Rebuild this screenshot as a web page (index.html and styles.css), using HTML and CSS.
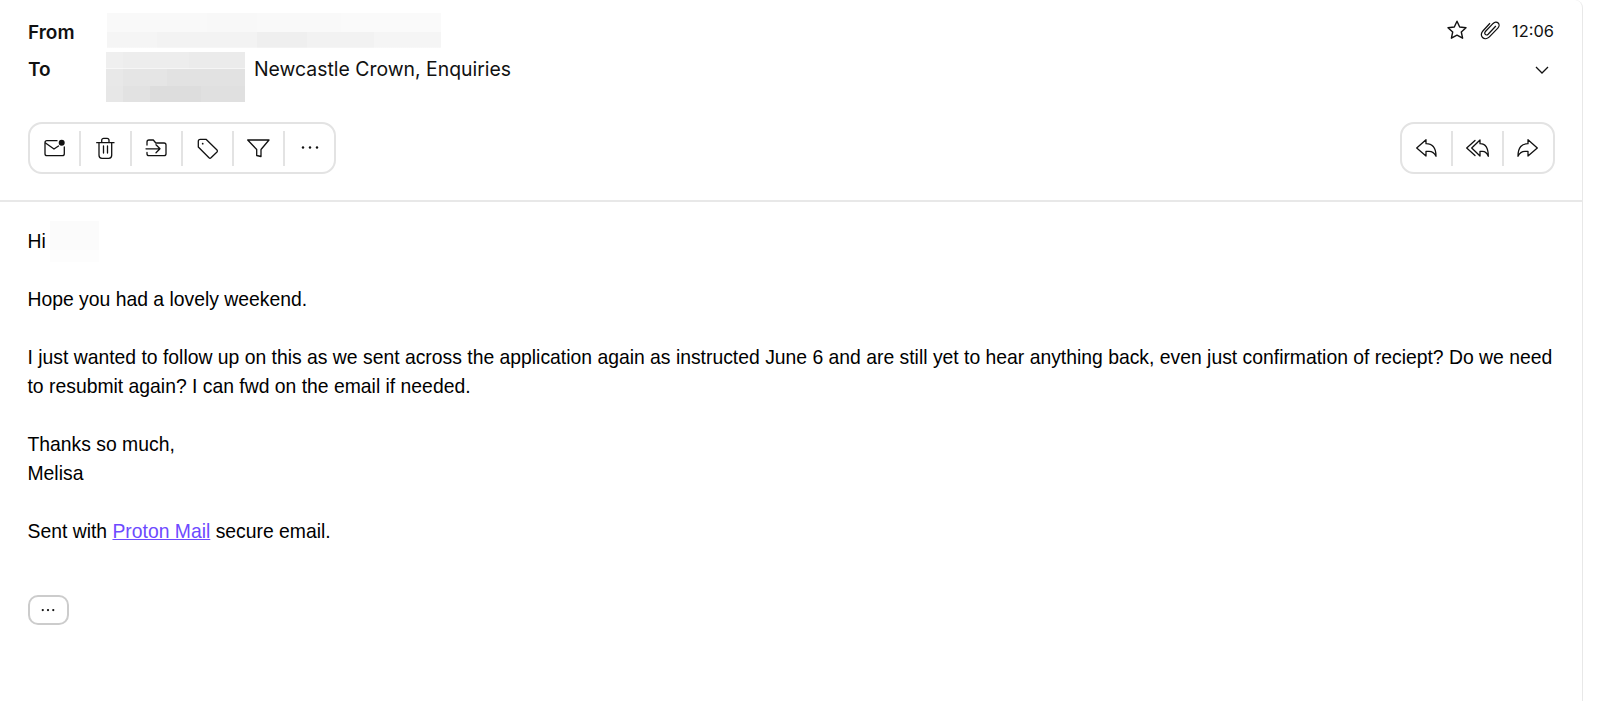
FILE: index.html
```html
<!DOCTYPE html>
<html lang="en">
<head>
    <meta charset="UTF-8">
    <title>Message</title>
    <link rel="stylesheet" href="styles.css">
</head>
<body>
    <div class="message">
        <header class="message-header">
            <div class="meta-row from-row">
                <span class="meta-label">From</span>
                <span class="redact redact-from"></span>
                <div class="meta-right">
                    <svg class="icon-sm star" viewBox="0 0 24 24"><path d="M12 3.200l2.700 5.800 6.300.7-4.700 4.300 1.300 6.200L12 17.100l-5.600 3.100 1.300-6.200L3 9.700l6.300-.7z"/></svg>
                    <svg class="icon-sm" viewBox="0 0 24 24"><path transform="translate(1.200 1.200) scale(.9)" d="M18.500 7.500l-8.600 9.200c-1 1-2.400 1-3.200.2s-.7-2.200.2-3.200l8.600-9c1.700-1.700 4.200-1.800 5.600-.4s1.300 3.900-.4 5.600l-9.400 9.800c-2.300 2.300-5.600 2.600-7.600.7s-1.700-5.200.6-7.600L12 4.500"/></svg>
                    <span class="time">12:06</span>
                </div>
            </div>
            <div class="meta-row to-row">
                <span class="meta-label">To</span>
                <span class="redact redact-to"></span>
                <span class="recipient">Newcastle Crown, Enquiries</span>
                <svg class="chevron" viewBox="0 0 16 16"><path d="M2 5l6 6 6-6"/></svg>
            </div>
            <div class="toolbar-row">
                <div class="btn-group">
                    <button class="tool-btn"><svg viewBox="0 0 24 24"><path d="M15 4.700H5a2 2 0 0 0-2 2v11a2 2 0 0 0 2 2h15.300a2 2 0 0 0 2-2V11"/><path d="M3.500 7l8.500 6 4.500-3"/><circle class="dot" cx="19.700" cy="6.700" r="3"/></svg></button>
                    <button class="tool-btn"><svg viewBox="0 0 24 24"><path d="M3.700 6.700H21M8.700 6.700V4.300a2 2 0 0 1 2-2H14a2 2 0 0 1 2 2v2.400M6 6.700v12.600a3 3 0 0 0 3 3h6.700a3 3 0 0 0 3-3V6.700M10.500 10v7M14.500 10v7"/></svg></button>
                    <button class="tool-btn"><svg viewBox="0 0 24 24"><path d="M3 9V6a2 2 0 0 1 2-2h4.300l2.500 3H20a2 2 0 0 1 2 2v8.700a2 2 0 0 1-2 2H5a2 2 0 0 1-2-2v-1.200"/><path d="M2 12.800h14M12 8.800l4 4-4 4"/></svg></button>
                    <button class="tool-btn"><svg viewBox="0 0 24 24"><path d="M3.300 5.300a2 2 0 0 1 2-2H11L22 14a1.500 1.500 0 0 1 0 2l-6 5.800a1.500 1.500 0 0 1-2 0L3.300 11z"/><circle class="dot" cx="7.700" cy="7.700" r=".9"/></svg></button>
                    <button class="tool-btn"><svg viewBox="0 0 24 24"><path d="M1.700 4H23l-8 9.500v7l-4.300-1v-6z"/></svg></button>
                    <button class="tool-btn"><svg viewBox="0 0 24 24"><circle class="dot" cx="6" cy="11.500" r="1.200"/><circle class="dot" cx="13" cy="11.500" r="1.200"/><circle class="dot" cx="20" cy="11.500" r="1.200"/></svg></button>
                </div>
                <div class="btn-group">
                    <button class="tool-btn"><svg viewBox="0 0 24 24"><path d="M2.700 12L12 3.700v4c6 0 10 3.300 10 12.600-1.500-3.300-4-5-7-5h-3V20z"/></svg></button>
                    <button class="tool-btn"><svg viewBox="0 0 24 24"><path d="M6.700 12L15 4v3.700c5 0 8.300 3.300 8.300 12.600-1.300-3.300-3.300-5-5.800-5H15V20z"/><path d="M10 4.500L1.700 12l8.300 7.500"/></svg></button>
                    <button class="tool-btn"><svg viewBox="0 0 24 24"><path d="M21.300 12L12 3.700v4c-6 0-10 3.300-10 12.600 1.500-3.300 4-5 7-5h3V20z"/></svg></button>
                </div>
            </div>
        </header>
        <div class="message-body">
            <p>Hi<span class="redact redact-name"></span></p>
            <p>Hope you had a lovely weekend.</p>
            <p>I just wanted to follow up on this as we sent across the application again as instructed June 6 and are still yet to hear anything back, even just confirmation of reciept? Do we need to resubmit again? I can fwd on the email if needed.</p>
            <p>Thanks so much,<br>Melisa</p>
            <p>Sent with <a href="#">Proton Mail</a> secure email.</p>
            <button class="more-btn"><svg viewBox="0 0 24 24"><circle cx="5" cy="12" r="1.500"/><circle cx="12" cy="12" r="1.500"/><circle cx="19" cy="12" r="1.500"/></svg></button>
        </div>
    </div>
</body>
</html>
```

FILE: styles.css
```css
html, body {
    margin: 0;
    padding: 0;
    height: 100%;
    background: white;
    overflow: hidden;
}
.message {
    width: 1582px;
    height: 701px;
    border-right: 1px solid #e8e8e8;
    border-top-right-radius: 8px;
}
.message-header {
    padding: 13px 27px 26px 28px;
    border-bottom: 2px solid #e8e8e8;
    font-family: 'Inter', sans-serif;
    color: #111;
}
.meta-row {
    display: flex;
    align-items: flex-start;
}
.from-row {
    height: 35px;
    margin-bottom: 4px;
}
.to-row {
    height: 50px;
}
.meta-label {
    width: 78px;
    font-size: 19px;
    font-weight: 600;
    line-height: 24px;
    margin-top: 8px;
}
.to-row .meta-label {
    margin-top: 6px;
}
.redact {
    display: inline-block;
}
.redact-from {
    width: 334px;
    height: 35px;
    margin-left: 1px;
    background:
        linear-gradient(90deg, #f9f9f9 0 30%, #f8f8f8 30% 45%, #f9f9f9 45% 70%, #fafafa 70% 100%) top / 100% 55% no-repeat,
        linear-gradient(90deg, #f5f5f5 0 15%, #f3f3f3 15% 45%, #efefef 45% 60%, #f2f2f2 60% 80%, #f5f5f5 80% 100%) bottom / 100% 45% no-repeat;
}
.redact-to {
    width: 139px;
    height: 50px;
    background:
        linear-gradient(90deg, #efefef 0 12%, #ededed 12% 60%, #ebebeb 60% 100%) top / 100% 33% no-repeat,
        linear-gradient(90deg, #e8e8e8 0 12%, #e5e5e5 12% 44%, #e2e2e2 44% 100%) center / 100% 34% no-repeat,
        linear-gradient(90deg, #e7e7e7 0 12%, #e2e2e2 12% 32%, #dddddd 32% 68%, #e0e0e0 68% 100%) bottom / 100% 33% no-repeat;
}
.redact-name {
    width: 49px;
    height: 41px;
    margin: -6px 0 -6px 4px;
    vertical-align: top;
    background: linear-gradient(#fbfbfb 70%, #fdfdfd 70%);
}
.meta-right {
    margin-left: auto;
    margin-right: 1px;
    display: flex;
    align-items: center;
    gap: 10px;
    height: 33px;
}
.icon-sm {
    width: 24px;
    height: 24px;
    fill: none;
    stroke: #111;
    stroke-width: 1.400;
    stroke-linejoin: round;
}
.star {
    margin-right: -1px;
}
.time {
    font-size: 16.400px;
    margin-top: 2px;
}
.recipient {
    font-size: 19.400px;
    line-height: 24px;
    margin-top: 5px;
    margin-left: 9px;
}
.chevron {
    width: 16px;
    height: 16px;
    margin-left: auto;
    margin-top: 10px;
    margin-right: 5px;
    fill: none;
    stroke: #111;
    stroke-width: 1.300;
}
.toolbar-row {
    display: flex;
    justify-content: space-between;
    margin-top: 20px;
}
.btn-group {
    display: flex;
    align-items: center;
    height: 48px;
    border: 2px solid #e3e3e3;
    border-radius: 14px;
}
.tool-btn {
    width: 51px;
    height: 35px;
    padding: 0;
    border: none;
    border-right: 2px solid #e3e3e3;
    background: none;
    display: flex;
    align-items: center;
    justify-content: center;
}
.tool-btn:last-child {
    width: 49px;
    border-right: none;
}
.tool-btn svg {
    width: 24px;
    height: 24px;
    margin-left: -2px;
    fill: none;
    stroke: #111;
    stroke-width: 1.300;
    stroke-linejoin: round;
    stroke-linecap: round;
}
.tool-btn svg .dot {
    fill: #111;
    stroke: none;
}
.message-body {
    padding: 25px 20px 0 27.500px;
    font-family: 'Liberation Sans', Arial, sans-serif;
    font-size: 19.350px;
    line-height: 29px;
    color: #000;
}
.message-body p {
    margin: 0 0 29px 0;
}
.message-body a {
    color: #6d4aff;
}
.more-btn {
    display: block;
    width: 41px;
    height: 30px;
    margin-top: 49px;
    padding: 0;
    border: 2px solid #ccc;
    border-radius: 10px;
    background: white;
}
.more-btn svg {
    display: block;
    width: 18px;
    height: 18px;
    margin: 0 auto;
    fill: #111;
}
```
